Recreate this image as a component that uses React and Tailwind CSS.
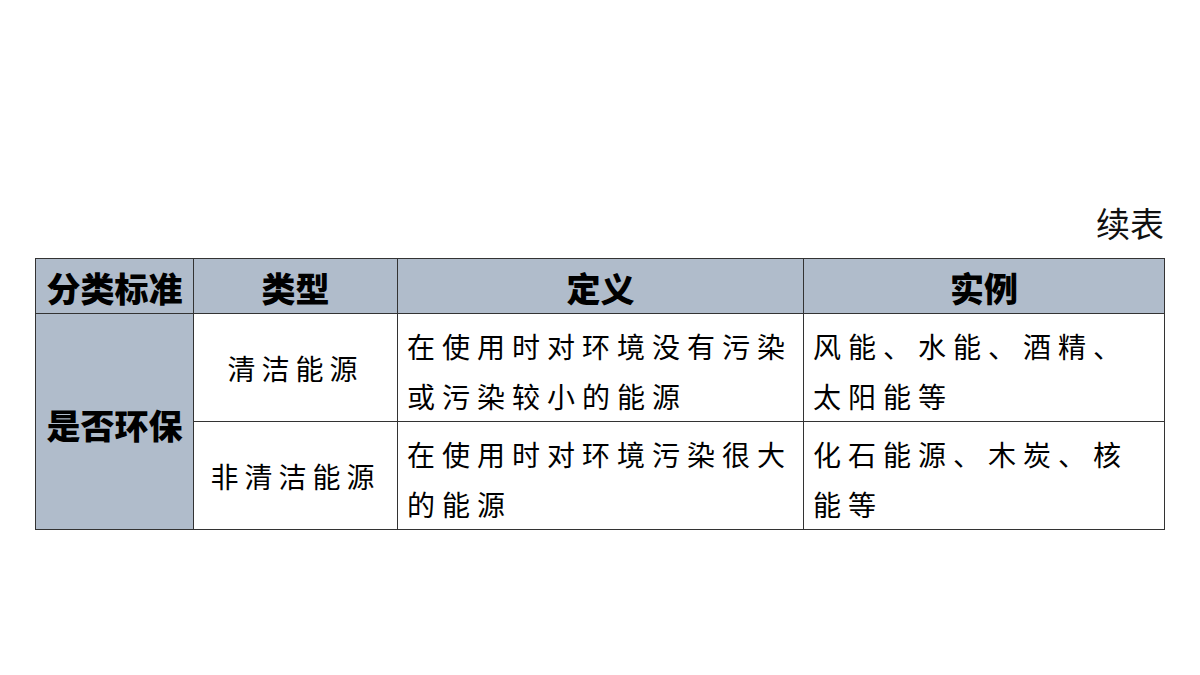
export default function App() {
  const cjk = { fontFamily: '"Noto Sans CJK SC", "Noto Sans", sans-serif' };
  const bodyCell = 'border-[1.5px] border-[#333] align-top pt-[7px] pl-[9px] text-[28px] leading-[50px] tracking-[7px] text-black';
  const headCell = 'border-[1.5px] border-[#333] text-[34px] font-black leading-[40px] text-black';
  return (
    <div className="w-[1200px] h-[675px] bg-white pt-[203px] pl-[35px]" style={cjk}>
      <div className="w-[1129px] text-right text-[34px] leading-[40px] text-[#111] mb-[15px]">续表</div>
      <table className="border-collapse table-fixed w-[1129px]">
        <colgroup>
          <col className="w-[158px]" />
          <col className="w-[204px]" />
          <col className="w-[406px]" />
          <col className="w-[361px]" />
        </colgroup>
        <thead>
          <tr className="h-[55px] bg-[#b0bccb]">
            <th className={`${headCell} pt-[3px]`}>分类标准</th>
            <th className={`${headCell} pt-[3px]`}>类型</th>
            <th className={`${headCell} pt-[3px]`}>定义</th>
            <th className={`${headCell} pt-[3px]`}>实例</th>
          </tr>
        </thead>
        <tbody>
          <tr className="h-[107px]">
            <td rowSpan={2} className={`${headCell} bg-[#b0bccb] text-center align-middle pt-[6px]`}>
              是否环保
            </td>
            <td className="border-[1.5px] border-[#333] text-center align-middle text-[28px] tracking-[6px] text-black">
              清洁能源
            </td>
            <td className={bodyCell}>在使用时对环境没有污染<br />或污染较小的能源</td>
            <td className={bodyCell}>风能、水能、酒精、<br />太阳能等</td>
          </tr>
          <tr className="h-[107px]">
            <td className="border-[1.5px] border-[#333] text-center align-middle text-[28px] tracking-[6px] text-black">
              非清洁能源
            </td>
            <td className={bodyCell}>在使用时对环境污染很大<br />的能源</td>
            <td className={bodyCell}>化石能源、木炭、核<br />能等</td>
          </tr>
        </tbody>
      </table>
    </div>
  );
}
